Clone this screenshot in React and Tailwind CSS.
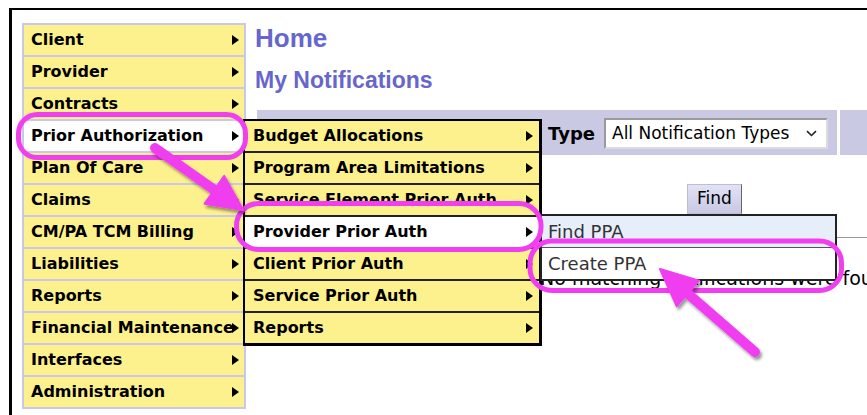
import React from 'react';

const mainMenu = [
  'Client',
  'Provider',
  'Contracts',
  'Prior Authorization',
  'Plan Of Care',
  'Claims',
  'CM/PA TCM Billing',
  'Liabilities',
  'Reports',
  'Financial Maintenance',
  'Interfaces',
  'Administration',
];

const priorAuthMenu = [
  'Budget Allocations',
  'Program Area Limitations',
  'Service Element Prior Auth',
  'Provider Prior Auth',
  'Client Prior Auth',
  'Service Prior Auth',
  'Reports',
];

const Caret = () => (
  <svg width="7" height="10" viewBox="0 0 7 10" className="shrink-0">
    <polygon points="0,0 7,5 0,10" fill="#000" />
  </svg>
);

// third level, opened from "Provider Prior Auth"
const PpaMenu = () => (
  <div className="absolute left-[295px] top-[93px] z-20 w-[297px] border-2 border-[#222] bg-white font-['DejaVu_Sans',sans-serif] text-[18px] font-normal text-[#333]">
    <div className="flex h-[32px] items-center border-b border-[#555] bg-[#e6eefa] pl-[6px] leading-[32px]">Find PPA</div>
    <div className="flex h-[31px] items-center bg-white pl-[6px] leading-[31px]">Create PPA</div>
  </div>
);

const PriorAuthMenu = () => (
  <div className="absolute left-[221px] top-[96px] z-10 flex w-[299px] flex-col gap-[2px] border-l-2 border-t-2 border-r-[3px] border-b-[3px] border-black bg-[#222]">
    {priorAuthMenu.map((label) => {
      const active = label === 'Provider Prior Auth';
      return (
        <div
          key={label}
          className={`flex h-[30px] items-center justify-between pl-[8px] pr-[6px] ${active ? 'bg-white' : 'bg-[#fdf18e]'}`}
        >
          <span className="whitespace-nowrap leading-[30px]">{label}</span>
          <Caret />
        </div>
      );
    })}
    <PpaMenu />
  </div>
);

const SideMenu = () => (
  <div className="relative mt-[1px] flex w-[224px] shrink-0 flex-col gap-[2px] self-start bg-[#c8c8e8] p-[2px] font-['DejaVu_Sans',sans-serif] text-[16px] font-bold text-black">
    {mainMenu.map((label) => {
      const active = label === 'Prior Authorization';
      return (
        <div
          key={label}
          className={`relative flex h-[30px] items-center pl-[7px] pr-[5px] ${active ? 'bg-white' : 'bg-[#fdf18e]'}`}
        >
          <span className="flex-1 whitespace-nowrap leading-[30px]">{label}</span>
          <span className="absolute right-[5px] top-[10px]">
            <Caret />
          </span>
        </div>
      );
    })}
    <PriorAuthMenu />
  </div>
);

const Notifications = () => (
  <div className="flex min-w-0 flex-1 flex-col overflow-hidden">
    <h1 className="mt-[1px] h-[30px] font-['Liberation_Sans',sans-serif] text-[26px] font-bold leading-[30px] text-[#6666cc]">Home</h1>
    <h2 className="mt-[13px] h-[28px] font-['Liberation_Sans',sans-serif] text-[23px] font-bold leading-[28px] text-[#6666cc]">My Notifications</h2>

    <div className="ml-[2px] mt-[16px] flex h-[45px] gap-[3px]">
      <div className="flex w-[580px] shrink-0 items-center justify-end gap-[9px] bg-[#c9c9e3] pr-[9px] pt-[2px]">
        <span className="font-['DejaVu_Sans',sans-serif] text-[18px] font-bold text-black">Type</span>
        <div className="flex h-[31px] w-[224px] items-center justify-between border-2 border-t-[#9a9a9a] border-l-[#9a9a9a] border-r-[#dcdcdc] border-b-[#dcdcdc] bg-white pl-[6px] pr-[9px] font-['DejaVu_Sans',sans-serif] text-[17px] text-black">
          <span className="whitespace-nowrap">All Notification Types</span>
          <svg width="11" height="7" viewBox="0 0 11 7">
            <path d="M1 1.2l4.5 4.3 4.5-4.3" fill="none" stroke="#222" strokeWidth="1.6" />
          </svg>
        </div>
      </div>
      <div className="flex-1 bg-[#c9c9e3]" />
    </div>

    <div className="mt-[29px] pl-[432px]">
      <button className="h-[30px] w-[55px] border border-[#bdbdd6] border-r-[#666] bg-gradient-to-b from-[#e2e2f5] to-[#c8c8e4] font-['DejaVu_Sans',sans-serif] text-[17px] text-black">
        Find
      </button>
    </div>

    <div className="mt-[23px] border-t border-[#999]" />

    <p className="mt-[28px] whitespace-nowrap pl-[285px] font-['DejaVu_Sans',sans-serif] text-[19px] leading-[24px] text-black">
      No matching notifications were found
    </p>
  </div>
);

const Callouts = () => (
  <svg className="pointer-events-none absolute left-0 top-0 z-30" width="867" height="415" viewBox="0 0 867 415">
    <defs>
      <filter id="drop" x="-20%" y="-20%" width="140%" height="140%">
        <feDropShadow dx="2" dy="3" stdDeviation="1.6" floodColor="#000" floodOpacity="0.4" />
      </filter>
    </defs>
    <g fill="none" stroke="#f03ef0" strokeWidth="5">
      <rect x="18.5" y="114.5" width="227" height="43" rx="19" />
      <rect x="236.5" y="203.5" width="304.5" height="46" rx="22" />
      <rect x="530" y="241" width="311.5" height="49.5" rx="22" />
    </g>
    <g filter="url(#drop)" fill="#f03ef0">
      <line x1="155" y1="148" x2="216" y2="191" stroke="#f03ef0" strokeWidth="10" strokeLinecap="round" />
      <polygon points="243,210 204.6,203.7 224.2,175.9" strokeLinejoin="round" stroke="#f03ef0" strokeWidth="2" />
    </g>
    <g filter="url(#drop)" fill="#f03ef0">
      <line x1="755" y1="352" x2="686" y2="292" stroke="#f03ef0" strokeWidth="10" strokeLinecap="round" />
      <polygon points="660,269 676.7,306.2 699.1,280.6" strokeLinejoin="round" stroke="#f03ef0" strokeWidth="2" />
    </g>
  </svg>
);

export default function App() {
  return (
    <div className="relative h-[415px] w-[867px] overflow-hidden bg-white pl-[9px] pt-2">
      <div className="flex h-[420px] gap-[9px] border-l-[3px] border-t-2 border-black bg-white pl-[10px] pt-[12px]">
        <SideMenu />
        <Notifications />
      </div>
      <Callouts />
    </div>
  );
}
